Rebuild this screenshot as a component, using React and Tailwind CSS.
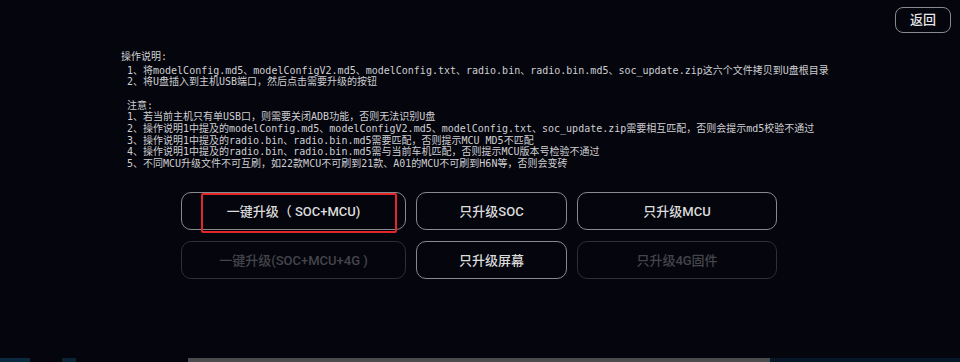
import React from "react";

const mono = { fontFamily: '"DejaVu Sans Mono", "Noto Sans CJK SC", monospace' };
const sans = { fontFamily: 'Roboto, "Noto Sans CJK SC", sans-serif' };

const guideLines = [
  "1、将modelConfig.md5、modelConfigV2.md5、modelConfig.txt、radio.bin、radio.bin.md5、soc_update.zip这六个文件拷贝到U盘根目录",
  "2、将U盘插入到主机USB端口，然后点击需要升级的按钮",
];

const noteLines = [
  "1、若当前主机只有单USB口，则需要关闭ADB功能，否则无法识别U盘",
  "2、操作说明1中提及的modelConfig.md5、modelConfigV2.md5、modelConfig.txt、soc_update.zip需要相互匹配，否则会提示md5校验不通过",
  "3、操作说明1中提及的radio.bin、radio.bin.md5需要匹配，否则提示MCU MD5不匹配",
  "4、操作说明1中提及的radio.bin、radio.bin.md5需与当前车机匹配，否则提示MCU版本号检验不通过",
  "5、不同MCU升级文件不可互刷，如22款MCU不可刷到21款、A01的MCU不可刷到H6N等，否则会变砖",
];

function UpgradeButton({ label, width, disabled, marked }) {
  return (
    <div
      className={
        "relative h-[38px] rounded-[10px] border-[1.5px] flex items-center justify-center text-[13px] font-medium " +
        width +
        (disabled ? " border-[#2f3036] text-[#44454a]" : " border-[#8a8a8e] text-[#dcdcdc]")
      }
      style={sans}
    >
      {label}
      {marked && (
        <div className="absolute left-[19px] top-[0px] w-[196px] h-[40px] border-2 border-[#e3262a] rounded-[2px]" />
      )}
    </div>
  );
}

export default function App() {
  return (
    <div className="w-[960px] h-[362px] bg-[#04050d] flex flex-col overflow-hidden">
      <div className="flex justify-end pt-[7px] pr-[9px]">
        <button
          className="w-[56px] h-[26px] rounded-[8px] border-[1.5px] border-[#8a8a8e] text-[13px] font-medium text-[#e6e6e6] flex items-center justify-center"
          style={sans}
        >
          返回
        </button>
      </div>

      <div className="pl-[121px] mt-[18px] text-[10px] text-[#cfcfd2] whitespace-nowrap" style={mono}>
        <div className="leading-[12px] mb-[1.5px]">操作说明:</div>
        <div className="pl-[6px] leading-[11.7px]">
          {guideLines.map(line => (
            <div key={line}>{line}</div>
          ))}
          <div className="h-[11.7px]" />
          <div>注意:</div>
          {noteLines.map(line => (
            <div key={line}>{line}</div>
          ))}
        </div>
      </div>

      <div className="mt-[22.5px] pl-[181px] flex flex-col gap-[11px]">
        <div className="flex gap-[10px]">
          <UpgradeButton label="一键升级（ SOC+MCU)" width="w-[225px]" marked />
          <UpgradeButton label="只升级SOC" width="w-[151px]" />
          <UpgradeButton label="只升级MCU" width="w-[200px]" />
        </div>
        <div className="flex gap-[10px]">
          <UpgradeButton label="一键升级(SOC+MCU+4G )" width="w-[225px]" disabled />
          <UpgradeButton label="只升级屏幕" width="w-[151px]" />
          <UpgradeButton label="只升级4G固件" width="w-[200px]" disabled />
        </div>
      </div>

      <div className="flex-1" />

      <div className="h-[4px] flex">
        <div className="w-[188px] flex">
          <div className="w-[30px] bg-[#0b2a3f]" />
          <div className="w-[32px]" />
          <div className="w-[14px] bg-[#0b2237]" />
        </div>
        <div className="w-[582px] bg-[#4b4b4e]" />
        <div className="flex-1 bg-[#06172a]" />
      </div>
    </div>
  );
}
